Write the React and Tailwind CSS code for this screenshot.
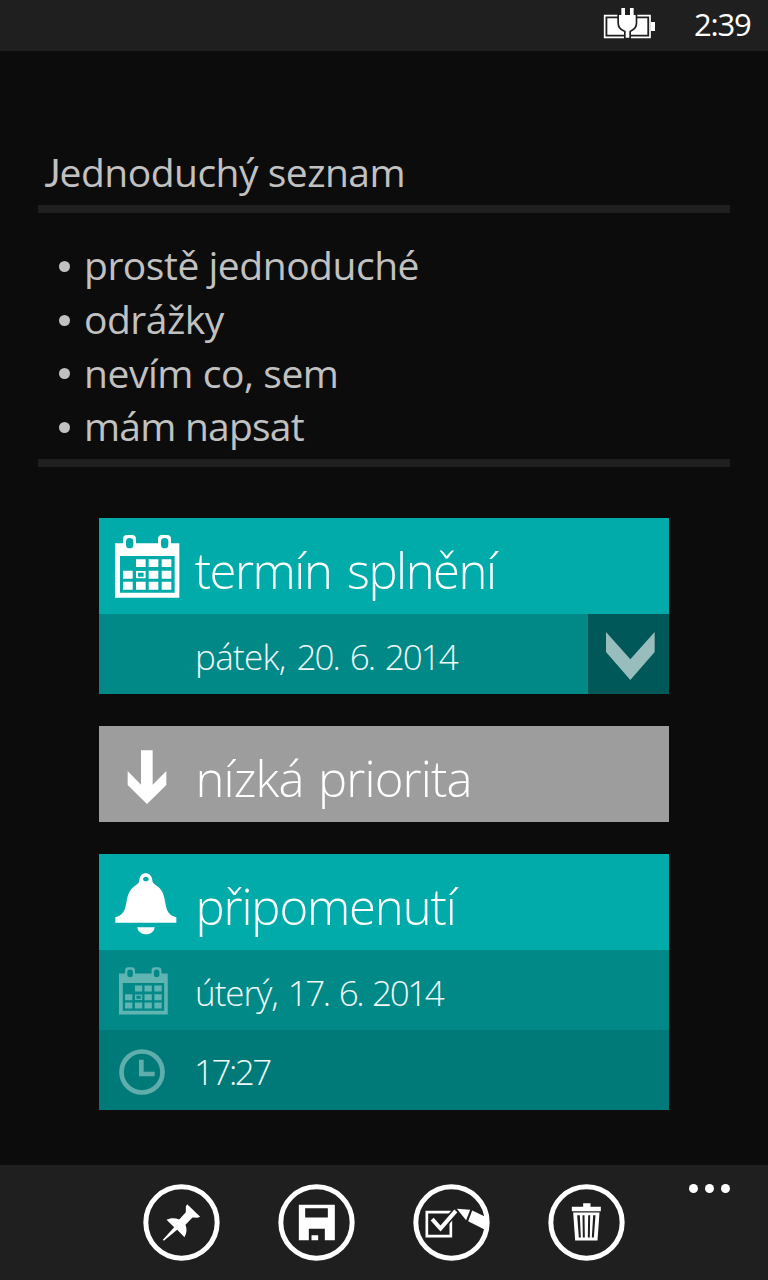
const LIST = [
  { text: 'prostě jednoduché', tracking: 'tracking-[-0.47px]' },
  { text: 'odrážky', tracking: 'tracking-[-0.5px]' },
  { text: 'nevím co, sem', tracking: 'tracking-[-0.45px]' },
  { text: 'mám napsat', tracking: 'tracking-[-0.78px]' },
];

function BatteryIcon() {
  return (
    <svg className="h-[40px] w-[60px]" viewBox="0 0 180 120" fill="none">
      <path d="M14 35H150V100H14Z" stroke="#fff" strokeWidth="5" />
      <path d="M22 43H142V92H22Z" fill="#fff" />
      <path d="M153 54H165V81H153Z" fill="#fff" />
      <path
        d="M64 12H75V33H90V12H101V33H107V57Q107 71 94 77L88 81V101H77V81L70 77Q57 71 57 57V33H64Z"
        fill="#fff"
        stroke="#1f1f1f"
        strokeWidth="10"
        paintOrder="stroke"
      />
    </svg>
  );
}

function CalendarIcon({ className }) {
  return (
    <svg className={className} viewBox="60 72 194 189" fill="currentColor" fillRule="evenodd">
      <path d="M60 97H84V84Q84 72 96 72H111Q123 72 123 84V97H189V84Q189 72 201 72H216Q228 72 228 84V97H253V260H60ZM75 135V245H239V135ZM104 81Q93 81 93 92V101Q93 112 104 112Q115 112 115 101V92Q115 81 104 81ZM209 81Q198 81 198 92V101Q198 112 209 112Q220 112 220 101V92Q220 81 209 81Z" />
      <path d="M123 145H152V168H123ZM161 145H190V168H161ZM200 145H229V168H200ZM84 179H113V203H84ZM161 179H190V203H161ZM200 179H229V203H200ZM84 212H113V236H84ZM123 212H152V236H123ZM161 212H190V236H161ZM200 212H229V236H200Z" />
      <path d="M123 180H152V202H123ZM129 185V197H146V185Z" />
    </svg>
  );
}

function BellIcon() {
  return (
    <svg className="mt-[3px] h-[62px] w-[62px]" viewBox="59 68 186 186" fill="currentColor" fillRule="evenodd">
      <path d="M151 69C162 69 170 77 171 90C171 97 175 100 181 104C202 117 206 134 210 158C214 184 222 196 243 201V217H60V201C81 195 89 183 93 157C97 134 102 117 122 104C128 100 132 97 132 90C133 77 140 69 151 69ZM152 79C147 79 143 82 143 86C143 90 147 93 152 93C157 93 160 90 160 86C160 82 157 79 152 79Z" />
      <path d="M126 231H178C177 244 166 252 152 252C138 252 127 244 126 231Z" />
    </svg>
  );
}

function ClockIcon() {
  return (
    <svg className="h-[46px] w-[46px]" viewBox="0 0 138 138" fill="none" stroke="currentColor">
      <circle cx="69" cy="69" r="61.5" strokeWidth="14" />
      <path d="M67 32V75H107" strokeWidth="14" />
    </svg>
  );
}

function RoundButton({ label, children }) {
  return (
    <button aria-label={label} className="h-[78px] w-[78px] shrink-0 text-white">
      <svg className="h-full w-full" viewBox="0 0 234 234" fill="none">
        <g transform="translate(1.5 1.5)">
          {children}
          <circle cx="117" cy="117" r="107" stroke="currentColor" strokeWidth="15" />
        </g>
      </svg>
    </button>
  );
}

export default function App() {
  return (
    <div className="flex h-[1280px] w-[768px] flex-col overflow-hidden bg-[#0c0c0c] font-['Open_Sans','Noto_Sans',sans-serif] text-[#c1c1c1]">
      <header className="flex h-[51px] shrink-0 items-center bg-[#1f1f1f] pb-[3px] pl-[600px] text-white">
        <BatteryIcon />
        <span className="ml-[34px] pt-px text-[31px] leading-[47px] tracking-[-1.2px]">2:39</span>
      </header>

      <main className="flex grow flex-col">
        <section className="mx-[38px] pt-[94px] text-[39px]">
          <h1 className="h-[60px] pl-[6.5px] leading-[54px] tracking-[-0.5px] whitespace-nowrap">
            <span className="inline-block w-[15px] font-['Lato','Open_Sans',sans-serif] text-[38px] leading-none">J</span>ednoduchý seznam
          </h1>
          <div className="h-[8px] bg-[#1f1f1f]" />
          <ul className="h-[246px] pt-[25px] pl-[20.5px]">
            {LIST.map(({ text, tracking }) => (
              <li key={text} className="flex h-[53.8px] items-center leading-[53.8px] whitespace-nowrap">
                <span className="mt-[3px] mr-[14.5px] h-[11px] w-[11px] rounded-full bg-[#c1c1c1]" />
                <span className={tracking}>{text}</span>
              </li>
            ))}
          </ul>
          <div className="h-[8px] bg-[#1f1f1f]" />
        </section>

        <section className="mt-[51px] ml-[99px] flex w-[570px] flex-col gap-[32px] font-light text-white">
          <div className="h-[176px]">
            <div className="flex h-[96px] items-center bg-[#00abaa] pl-[16px]">
              <CalendarIcon className="h-[63px] w-[64.7px]" />
              <span className="ml-[15px] pt-[9px] text-[49px] leading-[87px] tracking-[-1.5px] whitespace-nowrap [word-spacing:4.5px]">termín splnění</span>
            </div>
            <div className="flex h-[80px] bg-[#008987]">
              <span className="w-[489px] pt-[3px] pl-[96px] text-[35px] leading-[80px] tracking-[-2px] whitespace-nowrap text-[#f0f8f8] [word-spacing:3.8px]">
                <span className="tracking-[-0.7px]">pátek,</span> 20. 6. 2014
              </span>
              <button aria-label="Vybrat datum" className="w-[81px] bg-[#005958]">
                <svg className="h-[80px] w-[81px]" viewBox="0 0 243 240">
                  <path d="M54 54L127 136L200 54V114L127 198L54 114Z" fill="#99bdbc" />
                </svg>
              </button>
            </div>
          </div>

          <div className="flex h-[96px] items-center bg-[#9d9d9d]">
            <svg className="mt-[4px] ml-[28px] h-[56px] w-[40px]" viewBox="0 0 120 168" fill="#fff">
              <path d="M42 7H77V110L118 69V111L60 168L2 111V69L42 110Z" />
            </svg>
            <span className="ml-[28.5px] pt-[9px] text-[49px] leading-[87px] tracking-[-0.85px] whitespace-nowrap [word-spacing:2.5px]">nízká priorita</span>
          </div>

          <div className="h-[256px]">
            <div className="flex h-[96px] items-center bg-[#00abaa] pl-[15.5px]">
              <BellIcon />
              <span className="ml-[19px] pt-[9px] text-[49px] leading-[87px] tracking-[-1.15px] whitespace-nowrap">připomenutí</span>
            </div>
            <div className="flex h-[80px] items-center bg-[#008987] pl-[20px]">
              <CalendarIcon className="mt-[2px] h-[48px] w-[49px] text-[#60b4b2]" />
              <span className="ml-[27px] pt-[5px] text-[35px] leading-[75px] tracking-[-2.4px] whitespace-nowrap text-[#f0f8f8] [word-spacing:3.2px]">
                <span className="tracking-[-1px]">úterý,</span> 17. 6. 2014
              </span>
            </div>
            <div className="flex h-[80px] items-center bg-[#007a78] pl-[20px] text-[#60aeac]">
              <div className="pt-[3px]">
                <ClockIcon />
              </div>
              <span className="ml-[29px] pt-[4px] text-[35px] leading-[76px] tracking-[-2.5px] text-[#f0f8f8]">17:27</span>
            </div>
          </div>
        </section>
      </main>

      <footer className="flex h-[115px] shrink-0 bg-[#1f1f1f] pt-[18px] pl-[142px]">
        <div className="flex gap-[57px]">
          <RoundButton label="Připnout">
            <path d="M134 62L173 100L165 103L150 102L129 124C134 137 133 149 126 161L104 139L64 172L61 169L95 131L72 109C84 102 98 103 110 108L130 86L130 69Z" fill="currentColor" />
          </RoundButton>
          <RoundButton label="Uložit">
            <path d="M64 64H172V170H142V136H94V170H64ZM83 74V102H151V74ZM102 155H122V170H102Z" fill="currentColor" fillRule="evenodd" />
          </RoundButton>
          <RoundButton label="Upravit seznam">
            <path d="M43 86H115V158H43Z" stroke="currentColor" strokeWidth="8" />
            <path d="M60 108L83 135L131 82" stroke="#1f1f1f" strokeWidth="22" />
            <path d="M59 107L84 135L130 82" stroke="currentColor" strokeWidth="12" />
            <path d="M133 76L173 79L161 110Z" fill="currentColor" />
            <path d="M179 81L222 101V141L167 113Z" fill="currentColor" />
          </RoundButton>
          <RoundButton label="Smazat">
            <path d="M107 59H129V70H160V83H73V70H107Z" fill="currentColor" />
            <path d="M77 87H156L150 171H83ZM89 95L94 162H100L97 95ZM105 95L106 162H112L111 95ZM122 95L121 162H127L128 95ZM137 95L133 162H139L144 95Z" fill="currentColor" fillRule="evenodd" />
          </RoundButton>
        </div>
        <div className="mt-[1px] ml-[64px] flex h-[9px] gap-[7px]">
          <span className="h-[9px] w-[9px] rounded-full bg-white" />
          <span className="h-[9px] w-[9px] rounded-full bg-white" />
          <span className="h-[9px] w-[9px] rounded-full bg-white" />
        </div>
      </footer>
    </div>
  );
}
